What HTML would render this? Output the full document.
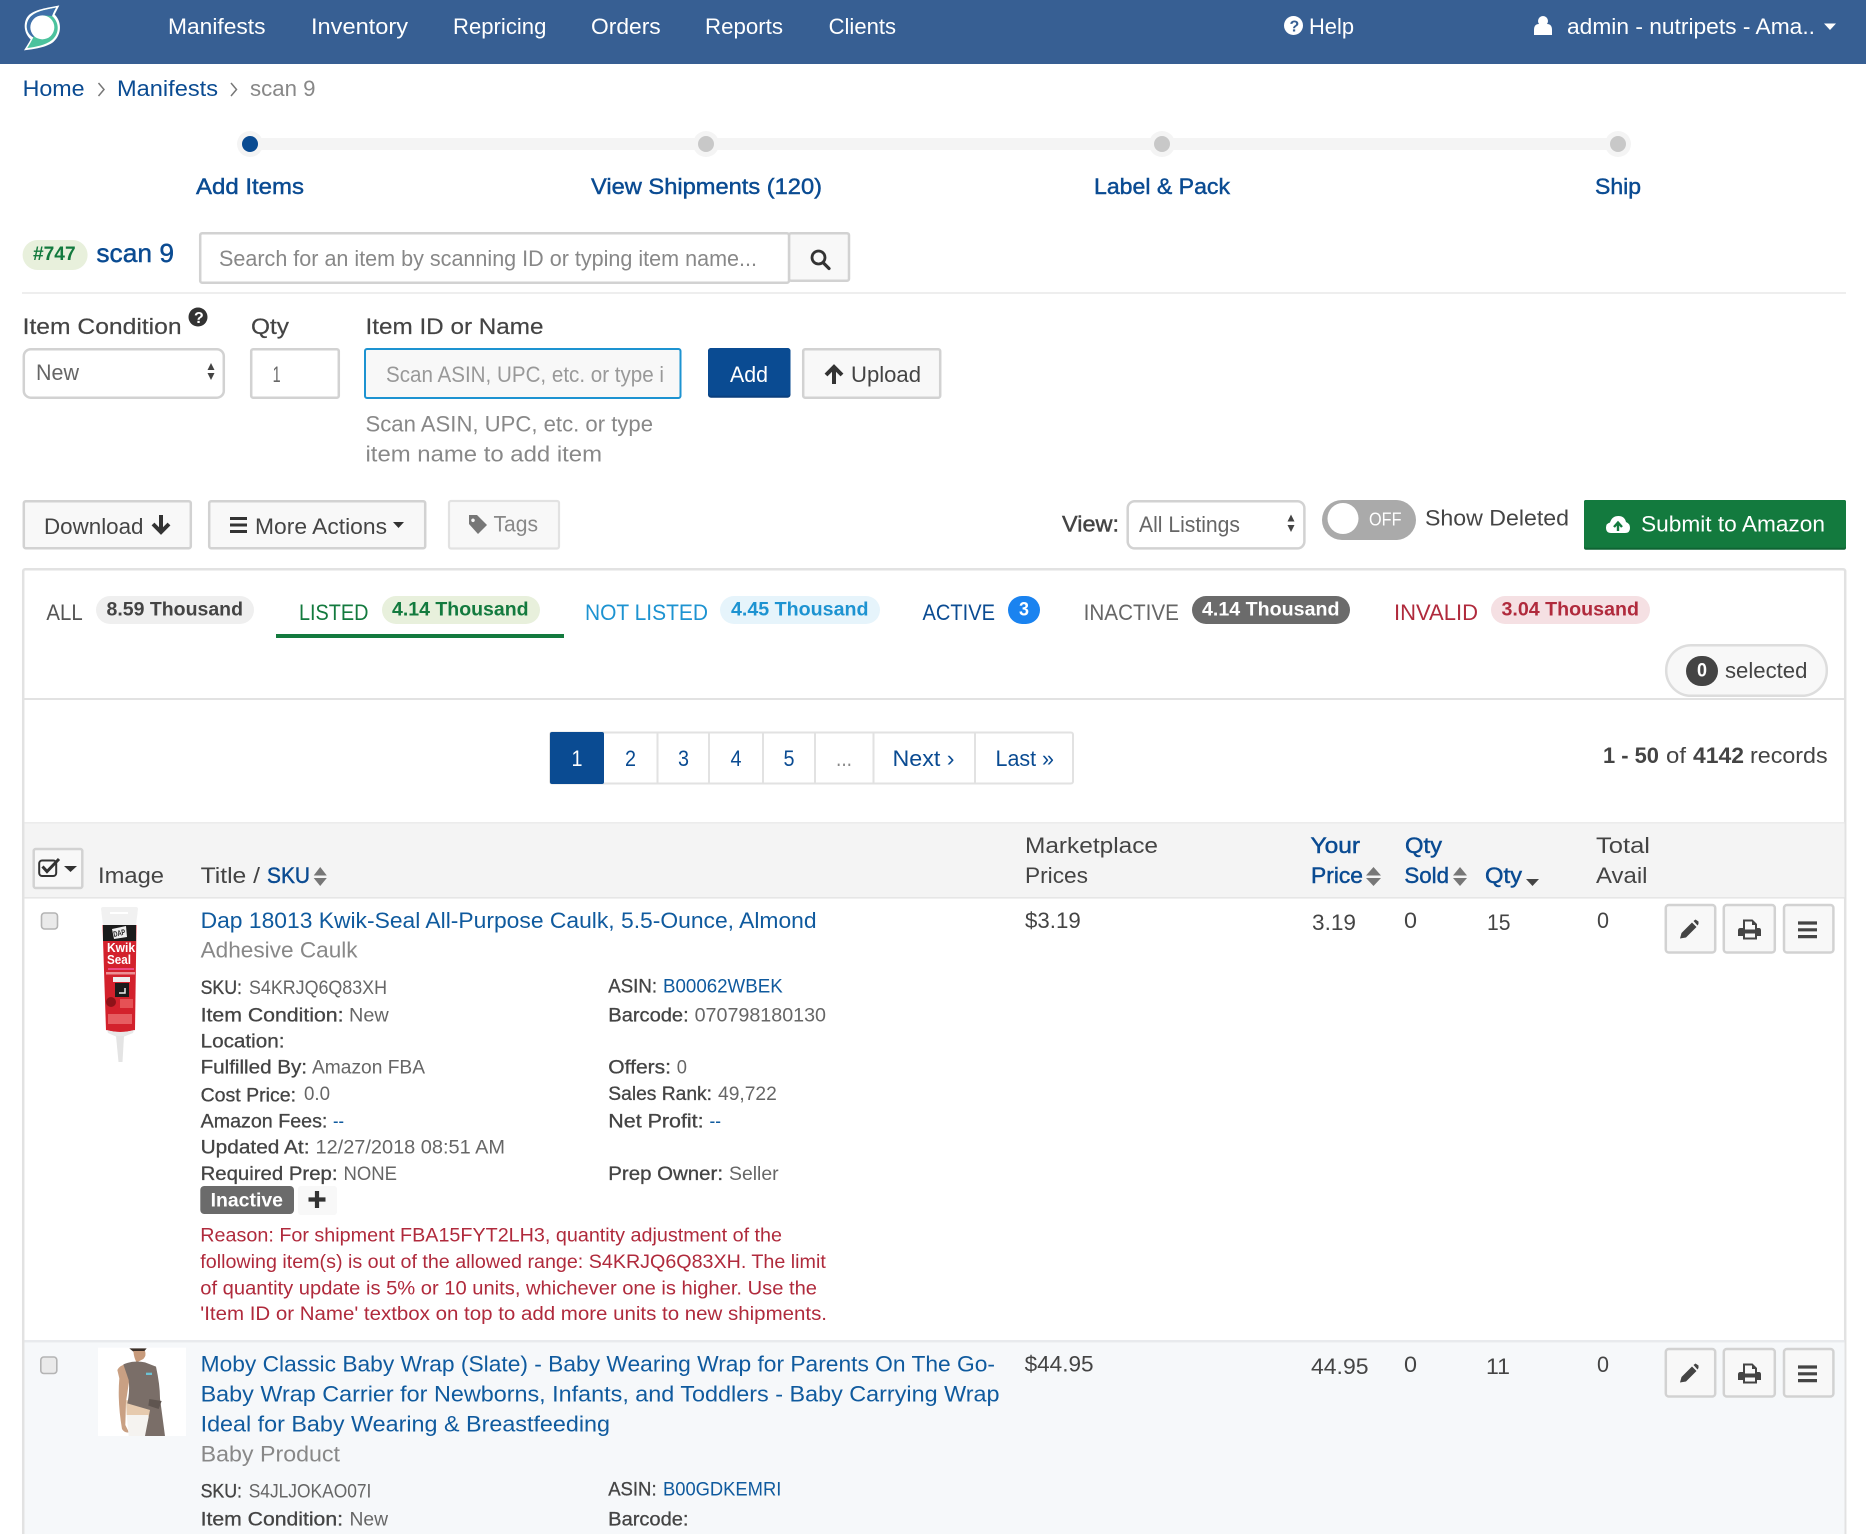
<!DOCTYPE html>
<html lang="en">
<head>
<meta charset="utf-8">
<title>scan 9 - Manifests</title>
<style>
html,body{margin:0;padding:0;background:#fff;width:1866px;height:1534px;overflow:hidden}
svg{display:block}
text{font-family:"Liberation Sans",Arial,sans-serif;font-size:22.3px;white-space:pre}
.d{fill:#444;color:#444}
.l{fill:#0a4b92;color:#0a4b92}
.t{fill:#0f5a9e;color:#0f5a9e}
.g{fill:#888;color:#888}
.w{fill:#fff;color:#fff}
.gr{fill:#137a3e;color:#137a3e}
.bl{fill:#1d93d1;color:#1d93d1}
.r{fill:#b02a3c;color:#b02a3c}
.i{fill:#666;color:#666}
.m{stroke:currentColor;stroke-width:.45px}
.b{fill:#f8f8f8;stroke:#d2d2d2;stroke-width:2.5}
.sm{font-size:19.3px}
.bo{font-weight:bold;font-size:19px}
</style>
</head>
<body>
<svg xmlns="http://www.w3.org/2000/svg" width="1866" height="1534" viewBox="0 0 1866 1534">
<!-- header -->
<rect width="1866" height="64" fill="#375f93"/>
<g transform="scale(.3333)">
<path d="M178 16C172 28 168 36 164 44C184 62 188 102 160 126C140 142 100 148 72 151C80 138 88 126 92 118C70 100 68 62 88 44C110 26 150 22 178 16Z" fill="#fff"/>
<path d="M168 23C163 32 160 38 156 48C178 66 180 100 156 120C136 136 106 141 82 144C88 134 94 124 100 112C76 100 74 66 94 48C112 32 145 28 168 23Z" fill="#4cc29d"/>
<path d="M168 23C163 32 160 38 156 48L130 46L100 112C76 100 74 66 94 48C112 32 145 28 168 23Z" fill="#3f6fa9"/>
<circle cx="127" cy="82" r="36" fill="#fff"/>
</g>
<g class="w">
<text x="168" y="34" textLength="97.5" lengthAdjust="spacingAndGlyphs">Manifests</text>
<text x="311" y="34" textLength="97" lengthAdjust="spacingAndGlyphs">Inventory</text>
<text x="453" y="34" textLength="93.4" lengthAdjust="spacingAndGlyphs">Repricing</text>
<text x="591" y="34" textLength="69.7" lengthAdjust="spacingAndGlyphs">Orders</text>
<text x="705" y="34" textLength="78" lengthAdjust="spacingAndGlyphs">Reports</text>
<text x="828.6" y="34" textLength="67.4" lengthAdjust="spacingAndGlyphs">Clients</text>
<text x="1309" y="34" textLength="45" lengthAdjust="spacingAndGlyphs">Help</text>
<text x="1567" y="34" textLength="248" lengthAdjust="spacingAndGlyphs">admin - nutripets - Ama..</text>
</g>
<circle cx="1293.5" cy="25.5" r="9.5" fill="#fff"/>
<text x="1289.5" y="31.5" style="font-size:16px;font-weight:bold" fill="#375f93">?</text>
<circle cx="1543" cy="21" r="5" fill="#fff"/>
<path d="M1534 35V30Q1534 24 1539 24H1547Q1552 24 1552 30V35Z" fill="#fff"/>
<path d="M1824 23.5H1836L1830 30Z" fill="#fff"/>

<!-- breadcrumb -->
<text class="l" x="22.6" y="96" textLength="62" lengthAdjust="spacingAndGlyphs">Home</text>
<path d="M98.5 83L104 89.5L98.5 96" fill="none" stroke="#777" stroke-width="1.5"/>
<text class="l" x="117" y="96" textLength="101" lengthAdjust="spacingAndGlyphs">Manifests</text>
<path d="M231 83L236.5 89.5L231 96" fill="none" stroke="#777" stroke-width="1.5"/>
<text class="g" x="250" y="96" textLength="65.5" lengthAdjust="spacingAndGlyphs">scan 9</text>

<!-- steps -->
<rect x="250" y="138" width="1368" height="12" fill="#f4f4f4"/>
<circle cx="250" cy="144" r="13" fill="#f4f4f4"/><circle cx="250" cy="144" r="8" fill="#0a4b92"/>
<circle cx="706" cy="144" r="13" fill="#f4f4f4"/><circle cx="706" cy="144" r="8" fill="#c8c8c8"/>
<circle cx="1162" cy="144" r="13" fill="#f4f4f4"/><circle cx="1162" cy="144" r="8" fill="#c8c8c8"/>
<circle cx="1618" cy="144" r="13" fill="#f4f4f4"/><circle cx="1618" cy="144" r="8" fill="#c8c8c8"/>
<g class="l m">
<text x="196" y="194" textLength="108" lengthAdjust="spacingAndGlyphs">Add Items</text>
<text x="591" y="194" textLength="231" lengthAdjust="spacingAndGlyphs">View Shipments (120)</text>
<text x="1094" y="194" textLength="136" lengthAdjust="spacingAndGlyphs">Label &amp; Pack</text>
<text x="1595" y="194" textLength="46" lengthAdjust="spacingAndGlyphs">Ship</text>
</g>

<!-- title row -->
<rect x="22.6" y="240" width="65" height="30" rx="15" fill="#e8f0dc"/>
<text class="gr bo" x="33" y="260" textLength="42.6" lengthAdjust="spacingAndGlyphs">#747</text>
<text class="l m" x="96.4" y="262" style="font-size:26px" textLength="77.6" lengthAdjust="spacingAndGlyphs">scan 9</text>
<rect x="789" y="233.2" width="60" height="47.5" rx="2" class="b"/>
<rect x="200.2" y="233.2" width="588.8" height="49.5" rx="2" fill="#fff" stroke="#d2d2d2" stroke-width="2.5"/>
<text class="g" x="219" y="266" textLength="538" lengthAdjust="spacingAndGlyphs">Search for an item by scanning ID or typing item name...</text>
<circle cx="818.5" cy="257.5" r="6.5" fill="none" stroke="#333" stroke-width="2.8"/>
<path d="M823 262.5L829 268.5" stroke="#333" stroke-width="3.2" stroke-linecap="round"/>
<rect x="22" y="292" width="1824" height="2" fill="#eee"/>

<!-- form labels -->
<g class="d m" style="stroke-width:.2px">
<text x="22.6" y="334" textLength="159" lengthAdjust="spacingAndGlyphs">Item Condition</text>
<text x="251" y="334" textLength="38" lengthAdjust="spacingAndGlyphs">Qty</text>
<text x="365.5" y="334" textLength="178" lengthAdjust="spacingAndGlyphs">Item ID or Name</text>
</g>
<circle cx="198" cy="317" r="9.5" fill="#333"/>
<text x="194" y="323" style="font-size:16px;font-weight:bold" fill="#fff">?</text>

<rect x="23.8" y="349.2" width="200" height="48.5" rx="7" fill="#fff" stroke="#d2d2d2" stroke-width="2.5"/>
<text class="i" x="36" y="380" textLength="43" lengthAdjust="spacingAndGlyphs">New</text>
<path d="M207.5 370L211 363L214.5 370ZM207.5 373L211 380L214.5 373Z" fill="#444"/>

<rect x="251.2" y="349.2" width="87.6" height="48.5" rx="2" fill="#fff" stroke="#d2d2d2" stroke-width="2.5"/>
<text class="i" x="272.6" y="382" textLength="8" lengthAdjust="spacingAndGlyphs">1</text>

<rect x="365" y="349" width="315.5" height="49" rx="2" fill="#f8f8f8" stroke="#1d93d1" stroke-width="2"/>
<text x="386" y="382" fill="#999" textLength="278" lengthAdjust="spacingAndGlyphs">Scan ASIN, UPC, etc. or type i</text>

<rect x="708" y="348" width="82.5" height="49.7" rx="3" fill="#0a3f7d"/>
<rect x="708" y="348" width="82.5" height="47.7" rx="3" fill="#0a4b92"/>
<text class="w" x="730" y="382" textLength="38" lengthAdjust="spacingAndGlyphs">Add</text>

<rect x="803.2" y="349.2" width="137" height="48.5" rx="2" class="b"/>
<path d="M834 384V367M826 375L834 367L842 375" fill="none" stroke="#333" stroke-width="4"/>
<text class="d" x="851" y="382" textLength="70" lengthAdjust="spacingAndGlyphs">Upload</text>

<text class="g" x="365.5" y="431.6" textLength="287.5" lengthAdjust="spacingAndGlyphs">Scan ASIN, UPC, etc. or type</text>
<text class="g" x="365.5" y="461.7" textLength="236.5" lengthAdjust="spacingAndGlyphs">item name to add item</text>

<!-- action row -->
<rect x="23.8" y="501.2" width="167" height="47" rx="2" class="b"/>
<text class="d" x="44" y="534" textLength="99.5" lengthAdjust="spacingAndGlyphs">Download</text>
<path d="M161 515V532M153 524L161 532L169 524" fill="none" stroke="#333" stroke-width="4"/>

<rect x="209.2" y="501.2" width="216" height="47" rx="2" class="b"/>
<path d="M230 518.5H247M230 525H247M230 531.5H247" stroke="#333" stroke-width="3"/>
<text class="d" x="255" y="534" textLength="132" lengthAdjust="spacingAndGlyphs">More Actions</text>
<path d="M393 522H404L398.5 528Z" fill="#333"/>

<rect x="449" y="501" width="110" height="47.5" rx="2" fill="#f8f8f8" stroke="#e2e2e2" stroke-width="2.2"/>
<path fill-rule="evenodd" d="M469 515H477L487 525L478 534L469 524ZM473 518.5a1.8 1.8 0 1 0 .01 0Z" fill="#777"/>
<text class="g" x="493.5" y="531.7" textLength="44.5" lengthAdjust="spacingAndGlyphs">Tags</text>

<text class="d m" x="1062" y="531.7" textLength="57" lengthAdjust="spacingAndGlyphs">View:</text>
<rect x="1127.7" y="501.2" width="176.7" height="47.2" rx="7" fill="#fff" stroke="#d2d2d2" stroke-width="2.5"/>
<text class="i" x="1139" y="532" textLength="101" lengthAdjust="spacingAndGlyphs">All Listings</text>
<path d="M1287.5 521.5L1291 514.5L1294.5 521.5ZM1287.5 525L1291 532L1294.5 525Z" fill="#444"/>

<rect x="1322" y="500" width="94" height="40" rx="20" fill="#aaa"/>
<circle cx="1343" cy="518.5" r="15.5" fill="#fff"/>
<text class="w" x="1369" y="525.7" style="font-size:18px" textLength="32.5" lengthAdjust="spacingAndGlyphs">OFF</text>
<text class="d" x="1425" y="525.7" textLength="144" lengthAdjust="spacingAndGlyphs">Show Deleted</text>

<rect x="1584" y="500" width="262" height="49.7" rx="2" fill="#0f6433"/>
<rect x="1584" y="500" width="262" height="47.7" rx="2" fill="#137a3e"/>
<path d="M1611 533Q1606 533 1606 527.5Q1606 523.5 1610 522.5Q1612 516 1618.5 516Q1624.5 516 1626 522Q1630 523.5 1630 528Q1630 533 1625 533Z" fill="#fff"/>
<path d="M1618 531V523.5M1614 527L1618 522.5L1622 527" fill="none" stroke="#137a3e" stroke-width="2.4"/>
<text class="w" x="1641" y="531.7" textLength="184" lengthAdjust="spacingAndGlyphs">Submit to Amazon</text>

<!-- main panel -->
<rect x="23.2" y="569.2" width="1822" height="980" rx="2" fill="#fff" stroke="#e2e2e2" stroke-width="2.5"/>

<g>
<text x="46.4" y="620" fill="#555" textLength="36.3" lengthAdjust="spacingAndGlyphs">ALL</text>
<rect x="96" y="596" width="158" height="28" rx="14" fill="#efefef"/>
<text class="d bo" x="106.5" y="615.7" textLength="136.5" lengthAdjust="spacingAndGlyphs">8.59 Thousand</text>

<text class="gr" x="299" y="620" textLength="69.5" lengthAdjust="spacingAndGlyphs">LISTED</text>
<rect x="382" y="596" width="158" height="28" rx="14" fill="#e8f0dc"/>
<text class="gr bo" x="392" y="615.7" textLength="136.6" lengthAdjust="spacingAndGlyphs">4.14 Thousand</text>
<rect x="276" y="634" width="288" height="4" fill="#137a3e"/>

<text class="bl" x="585" y="620" textLength="123" lengthAdjust="spacingAndGlyphs">NOT LISTED</text>
<rect x="720" y="596" width="160" height="28" rx="14" fill="#e6f4fb"/>
<text class="bl bo" x="731" y="615.7" textLength="137.5" lengthAdjust="spacingAndGlyphs">4.45 Thousand</text>

<text class="l" x="922.5" y="620" textLength="72.5" lengthAdjust="spacingAndGlyphs">ACTIVE</text>
<rect x="1008" y="596" width="32" height="28" rx="14" fill="#1a83f0"/>
<text class="w bo" x="1019" y="615.7" textLength="10" lengthAdjust="spacingAndGlyphs">3</text>

<text class="i" x="1083.6" y="620" textLength="95.4" lengthAdjust="spacingAndGlyphs">INACTIVE</text>
<rect x="1192" y="596" width="158" height="28" rx="14" fill="#6b6b6b"/>
<text class="w bo" x="1202" y="615.7" textLength="137.5" lengthAdjust="spacingAndGlyphs">4.14 Thousand</text>

<text class="r" x="1394" y="620" textLength="84" lengthAdjust="spacingAndGlyphs">INVALID</text>
<rect x="1491" y="596" width="159" height="28" rx="14" fill="#f5e0e3"/>
<text class="r bo" x="1501.5" y="615.7" textLength="137.5" lengthAdjust="spacingAndGlyphs">3.04 Thousand</text>
</g>

<rect x="1666.2" y="645.2" width="160.6" height="50.6" rx="25" fill="#f8f8f8" stroke="#ddd" stroke-width="2.5"/>
<rect x="1686" y="656" width="32" height="30" rx="15" fill="#444"/>
<text class="w bo" x="1697" y="676.5" textLength="10" lengthAdjust="spacingAndGlyphs">0</text>
<text class="d" x="1725" y="678" textLength="82.4" lengthAdjust="spacingAndGlyphs">selected</text>
<rect x="24" y="698" width="1821" height="2" fill="#e2e2e2"/>

<!-- pagination -->
<rect x="550" y="732.5" width="523" height="51" rx="2" fill="#fff" stroke="#e2e2e2" stroke-width="2"/>
<rect x="550" y="732" width="54" height="52" rx="2" fill="#0a4b92"/>
<path d="M657.5 732V783M709 732V783M763 732V783M815 732V783M873.5 732V783M975 732V783" stroke="#e2e2e2" stroke-width="2"/>
<text class="w" x="571.5" y="766" textLength="11" lengthAdjust="spacingAndGlyphs">1</text>
<g class="l">
<text x="625" y="766" textLength="11" lengthAdjust="spacingAndGlyphs">2</text>
<text x="678" y="766" textLength="11" lengthAdjust="spacingAndGlyphs">3</text>
<text x="730.5" y="766" textLength="11" lengthAdjust="spacingAndGlyphs">4</text>
<text x="783.5" y="766" textLength="11" lengthAdjust="spacingAndGlyphs">5</text>
<text x="892.5" y="766" textLength="62" lengthAdjust="spacingAndGlyphs">Next ›</text>
<text x="995.5" y="766" textLength="58.5" lengthAdjust="spacingAndGlyphs">Last »</text>
</g>
<text class="g" x="836" y="766" textLength="16" lengthAdjust="spacingAndGlyphs">...</text>
<text class="d" x="1603" y="763" font-weight="bold" textLength="56" lengthAdjust="spacingAndGlyphs">1 - 50</text>
<text class="d" x="1666" y="763" textLength="20" lengthAdjust="spacingAndGlyphs">of</text>
<text class="d" x="1693" y="763" font-weight="bold" textLength="51" lengthAdjust="spacingAndGlyphs">4142</text>
<text class="d" x="1750" y="763" textLength="77.6" lengthAdjust="spacingAndGlyphs">records</text>

<!-- table header -->
<rect x="24.5" y="822" width="1820" height="76" fill="#f4f4f4"/>
<rect x="24.5" y="897" width="1820" height="1.6" fill="#e6e6e6"/>
<rect x="24.5" y="822" width="1820" height="1.6" fill="#ececec"/>
<rect x="33.7" y="849" width="48.6" height="39" rx="2" class="b"/>
<rect x="39.2" y="860.5" width="17" height="15.5" rx="3" fill="none" stroke="#333" stroke-width="2"/>
<path d="M42.5 866.5L47 871.5L59 859" fill="none" stroke="#333" stroke-width="3"/>
<path d="M64 866H77L70.5 872Z" fill="#333"/>
<g class="d">
<text x="98" y="883" textLength="66" lengthAdjust="spacingAndGlyphs">Image</text>
<text x="200.6" y="883" textLength="59.4" lengthAdjust="spacingAndGlyphs">Title /</text>
<text x="1025" y="853" textLength="133" lengthAdjust="spacingAndGlyphs">Marketplace</text>
<text x="1025" y="883" textLength="63" lengthAdjust="spacingAndGlyphs">Prices</text>
<text x="1596" y="853" textLength="54" lengthAdjust="spacingAndGlyphs">Total</text>
<text x="1596" y="883" textLength="51.5" lengthAdjust="spacingAndGlyphs">Avail</text>
</g>
<g class="l m">
<text x="267" y="883" textLength="43" lengthAdjust="spacingAndGlyphs">SKU</text>
<text x="1310.5" y="853" textLength="49.5" lengthAdjust="spacingAndGlyphs">Your</text>
<text x="1311" y="883" textLength="52" lengthAdjust="spacingAndGlyphs">Price</text>
<text x="1405" y="853" textLength="37" lengthAdjust="spacingAndGlyphs">Qty</text>
<text x="1404.4" y="883" textLength="44.6" lengthAdjust="spacingAndGlyphs">Sold</text>
<text x="1485" y="883" textLength="37" lengthAdjust="spacingAndGlyphs">Qty</text>
</g>
<path d="M313.7 875.5L320.2 867L326.8 875.5ZM313.7 878L320.2 886L326.8 878Z" fill="#777"/>
<path d="M1366 875.5L1373.5 867L1381 875.5ZM1366 878L1373.5 886L1381 878Z" fill="#777"/>
<path d="M1453 875.5L1460 867L1467 875.5ZM1453 878L1460 886L1467 878Z" fill="#777"/>
<path d="M1526 879H1539L1532.5 886Z" fill="#444"/>

<!-- row 1 -->
<rect x="41.5" y="913" width="16" height="16" rx="3" fill="#eaeaea" stroke="#b4b4b4" stroke-width="1.6"/>
<!-- tube -->
<path d="M101 909Q101 907 103 907H136Q138 907 138 909L136 925H103Z" fill="#f1f1f1"/>
<rect x="110" y="912" width="18" height="2" fill="#fff"/>
<path d="M102.5 925H136.5L135 1030Q120 1034 106 1030Z" fill="#d3212c"/>
<rect x="103" y="925" width="33" height="16" fill="#1b1b1b"/>
<path d="M112 929L126 926L127 937L114 939Z" fill="#eee"/>
<text x="114" y="937" fill="#222" transform="rotate(-12 114 937)" style="font-size:8px;font-weight:bold" textLength="12" lengthAdjust="spacingAndGlyphs">DAP</text>
<text x="107" y="952" fill="#fff" style="font-size:13px;font-weight:bold" textLength="28" lengthAdjust="spacingAndGlyphs">Kwik</text>
<text x="107" y="964" fill="#fff" style="font-size:13px;font-weight:bold" textLength="24" lengthAdjust="spacingAndGlyphs">Seal</text>
<rect x="108" y="968" width="26" height="2" fill="#f6b" opacity=".6"/>
<rect x="106" y="972" width="29" height="2.5" fill="#f7c0c0" opacity=".7"/>
<rect x="113" y="977" width="17" height="5" fill="#eee"/>
<rect x="115" y="983" width="14" height="14" fill="#1b1b1b"/>
<path d="M119 993H125V988" stroke="#eee" stroke-width="1.5" fill="none"/>
<circle cx="111" cy="1002" r="5" fill="#8e1218"/>
<rect x="120" y="999" width="13" height="9" fill="#e66" opacity=".7"/>
<rect x="108" y="1014" width="24" height="10" fill="#e77" opacity=".7"/>
<path d="M107 1030Q120 1034 134 1030L133 1033L123 1037H117L108 1033Z" fill="#e8e8e8"/>
<path d="M116 1036H124L122.5 1062H118.5Z" fill="#e4e4e4"/>

<text class="t" x="200.6" y="928" textLength="616" lengthAdjust="spacingAndGlyphs">Dap 18013 Kwik-Seal All-Purpose Caulk, 5.5-Ounce, Almond</text>
<text class="g" x="200.6" y="957.7" textLength="157" lengthAdjust="spacingAndGlyphs">Adhesive Caulk</text>

<g>
<g class="d m" style="stroke-width:.3px">
<text class="sm" x="200.6" y="994" textLength="41.4" lengthAdjust="spacingAndGlyphs">SKU:</text>
<text class="sm" x="200.6" y="1021.7" textLength="142.9" lengthAdjust="spacingAndGlyphs">Item Condition:</text>
<text class="sm" x="200.6" y="1047.7" textLength="83.9" lengthAdjust="spacingAndGlyphs">Location:</text>
<text class="sm" x="200.6" y="1073.3" textLength="106.4" lengthAdjust="spacingAndGlyphs">Fulfilled By:</text>
<text class="sm" x="200.6" y="1101.7" textLength="95.4" lengthAdjust="spacingAndGlyphs">Cost Price:</text>
<text class="sm" x="200.6" y="1127.7" textLength="126.8" lengthAdjust="spacingAndGlyphs">Amazon Fees:</text>
<text class="sm" x="200.6" y="1153.3" textLength="108.9" lengthAdjust="spacingAndGlyphs">Updated At:</text>
<text class="sm" x="200.6" y="1180" textLength="136.9" lengthAdjust="spacingAndGlyphs">Required Prep:</text>
<text class="sm" x="608.3" y="992.3" textLength="48.7" lengthAdjust="spacingAndGlyphs">ASIN:</text>
<text class="sm" x="608.3" y="1021.7" textLength="80.4" lengthAdjust="spacingAndGlyphs">Barcode:</text>
<text class="sm" x="608.3" y="1073.3" textLength="62.7" lengthAdjust="spacingAndGlyphs">Offers:</text>
<text class="sm" x="608.3" y="1100" textLength="103.7" lengthAdjust="spacingAndGlyphs">Sales Rank:</text>
<text class="sm" x="608.3" y="1127.7" textLength="95.3" lengthAdjust="spacingAndGlyphs">Net Profit:</text>
<text class="sm" x="608.3" y="1180" textLength="114.7" lengthAdjust="spacingAndGlyphs">Prep Owner:</text>
</g>
<g class="i">
<text class="sm" x="249" y="994" textLength="138" lengthAdjust="spacingAndGlyphs">S4KRJQ6Q83XH</text>
<text class="sm" x="349" y="1021.7" textLength="39.7" lengthAdjust="spacingAndGlyphs">New</text>
<text class="sm" x="312" y="1073.3" textLength="113" lengthAdjust="spacingAndGlyphs">Amazon FBA</text>
<text class="sm" x="304" y="1100" textLength="26" lengthAdjust="spacingAndGlyphs">0.0</text>
<text class="sm" x="315.5" y="1153.3" textLength="189.5" lengthAdjust="spacingAndGlyphs">12/27/2018 08:51 AM</text>
<text class="sm" x="343.5" y="1180" textLength="53.5" lengthAdjust="spacingAndGlyphs">NONE</text>
<text class="sm" x="694.6" y="1021.7" textLength="131.4" lengthAdjust="spacingAndGlyphs">070798180130</text>
<text class="sm" x="676.8" y="1073.3" textLength="10.2" lengthAdjust="spacingAndGlyphs">0</text>
<text class="sm" x="718" y="1100" textLength="58.8" lengthAdjust="spacingAndGlyphs">49,722</text>
<text class="sm" x="729" y="1180" textLength="49.6" lengthAdjust="spacingAndGlyphs">Seller</text>
</g>
<g class="t">
<text class="sm" x="663" y="992.3" textLength="119.7" lengthAdjust="spacingAndGlyphs">B00062WBEK</text>
<text class="sm" x="333" y="1127.7" textLength="11" lengthAdjust="spacingAndGlyphs">--</text>
<text class="sm" x="709.5" y="1127.7" textLength="11.5" lengthAdjust="spacingAndGlyphs">--</text>
</g>
</g>

<rect x="200.3" y="1186" width="93.7" height="28" rx="4" fill="#6b6b6b"/>
<text class="w bo" x="210.6" y="1206.7" textLength="72.4" lengthAdjust="spacingAndGlyphs">Inactive</text>
<rect x="298" y="1186" width="39" height="29" rx="3" fill="#f8f8f8"/>
<path d="M317 1191V1208M308.5 1199.5H325.5" stroke="#333" stroke-width="4.2"/>

<g class="r">
<text class="sm" x="200.3" y="1241.7" textLength="581.7" lengthAdjust="spacingAndGlyphs">Reason: For shipment FBA15FYT2LH3, quantity adjustment of the</text>
<text class="sm" x="200.3" y="1268" textLength="625.5" lengthAdjust="spacingAndGlyphs">following item(s) is out of the allowed range: S4KRJQ6Q83XH. The limit</text>
<text class="sm" x="200.3" y="1294.3" textLength="616.7" lengthAdjust="spacingAndGlyphs">of quantity update is 5% or 10 units, whichever one is higher. Use the</text>
<text class="sm" x="200.3" y="1320" textLength="626.7" lengthAdjust="spacingAndGlyphs">'Item ID or Name' textbox on top to add more units to new shipments.</text>
</g>

<text class="d" x="1025" y="928" textLength="55.7" lengthAdjust="spacingAndGlyphs">$3.19</text>
<text class="d" x="1312" y="930" textLength="44" lengthAdjust="spacingAndGlyphs">3.19</text>
<text class="d" x="1404" y="928" textLength="13" lengthAdjust="spacingAndGlyphs">0</text>
<text class="d" x="1487" y="930" textLength="23.5" lengthAdjust="spacingAndGlyphs">15</text>
<text class="d" x="1597" y="928" textLength="12" lengthAdjust="spacingAndGlyphs">0</text>

<defs>
<g id="acts">
<rect x="1665.8" y="905" width="49.4" height="47.5" rx="3" class="b"/>
<rect x="1723.8" y="905" width="51" height="47.5" rx="3" class="b"/>
<rect x="1784" y="905" width="49.4" height="47.5" rx="3" class="b"/>
<path d="M1680 938.5L1681.5 933L1692 922.5L1696.5 927L1686 937.5Z" fill="#444"/>
<path d="M1693.5 921L1695.5 919.5L1698.5 921.5L1698.5 924L1697.5 925.5Z" fill="#444"/>
<path fill-rule="evenodd" d="M1743 919.5H1752.5L1757 924V928H1759Q1761 928 1761 930.5V936H1757V939.5H1743V936H1738V930.5Q1738 928 1740.5 928H1743ZM1745 921.5V929.5H1755V925H1752V921.5ZM1745 933.5V937.5H1755V933.5Z" fill="#444"/>
<path d="M1798 923H1817M1798 929.8H1817M1798 936.6H1817" stroke="#444" stroke-width="3.2"/>
</g>
</defs>
<use href="#acts"/>

<!-- row 2 -->
<rect x="24.5" y="1342" width="1820" height="192" fill="#f6f8fa"/>
<rect x="24.5" y="1340" width="1820" height="2.4" fill="#e8eaed"/>
<rect x="98" y="1347.7" width="88" height="88.3" fill="#fff"/>
<g transform="translate(80 1335) scale(.3333)">
<path d="M148 40H200L192 50L170 58Z" fill="#3a2f28"/>
<path d="M160 48H195Q200 62 190 72L170 82Q162 70 160 48Z" fill="#c79a7b"/>
<path d="M112 105Q118 92 135 88L148 135L138 200L136 270L147 292Q134 295 126 282Q112 200 118 130Z" fill="#c9a083"/>
<path d="M138 195L215 205L208 245L140 240Z" fill="#e6caae"/>
<path d="M140 240H205L198 303H146Z" fill="#f5f3f0"/>
<path d="M130 88Q160 75 195 82L228 95Q240 150 240 190L255 303H195L210 225L142 205Q150 170 146 135Z" fill="#7a6e68"/>
<path d="M208 192L245 198L236 222L205 212Z" fill="#5f5550"/>
<rect x="198" y="113" width="18" height="7" fill="#6cc3d4"/>
</g>
<rect x="40.8" y="1357" width="16" height="16.5" rx="3" fill="#eaeaea" stroke="#b4b4b4" stroke-width="1.6"/>
<text class="t" x="200.6" y="1371.7" textLength="794.4" lengthAdjust="spacingAndGlyphs">Moby Classic Baby Wrap (Slate) - Baby Wearing Wrap for Parents On The Go-</text>
<text class="t" x="200.6" y="1401.7" textLength="798.9" lengthAdjust="spacingAndGlyphs">Baby Wrap Carrier for Newborns, Infants, and Toddlers - Baby Carrying Wrap</text>
<text class="t" x="200.6" y="1431.7" textLength="409.4" lengthAdjust="spacingAndGlyphs">Ideal for Baby Wearing &amp; Breastfeeding</text>
<text class="g" x="200.6" y="1461.7" textLength="139.4" lengthAdjust="spacingAndGlyphs">Baby Product</text>
<g class="d m" style="stroke-width:.3px">
<text class="sm" x="200.6" y="1497.7" textLength="41.4" lengthAdjust="spacingAndGlyphs">SKU:</text>
<text class="sm" x="200.6" y="1525.7" textLength="142.4" lengthAdjust="spacingAndGlyphs">Item Condition:</text>
<text class="sm" x="608.2" y="1495.7" textLength="48.4" lengthAdjust="spacingAndGlyphs">ASIN:</text>
<text class="sm" x="608.2" y="1525.7" textLength="80.3" lengthAdjust="spacingAndGlyphs">Barcode:</text>
</g>
<text class="i sm" x="248.7" y="1497.7" textLength="122.7" lengthAdjust="spacingAndGlyphs">S4JLJOKAO07I</text>
<text class="i sm" x="349.5" y="1525.7" textLength="38.5" lengthAdjust="spacingAndGlyphs">New</text>
<text class="t sm" x="663" y="1495.7" textLength="118.3" lengthAdjust="spacingAndGlyphs">B00GDKEMRI</text>

<text class="d" x="1024.6" y="1371.7" textLength="69" lengthAdjust="spacingAndGlyphs">$44.95</text>
<text class="d" x="1311" y="1374" textLength="57.5" lengthAdjust="spacingAndGlyphs">44.95</text>
<text class="d" x="1404" y="1372" textLength="13" lengthAdjust="spacingAndGlyphs">0</text>
<text class="d" x="1486" y="1374" textLength="24" lengthAdjust="spacingAndGlyphs">11</text>
<text class="d" x="1597" y="1372" textLength="12" lengthAdjust="spacingAndGlyphs">0</text>
<use href="#acts" transform="translate(0 444)"/>
</svg>
</body>
</html>
